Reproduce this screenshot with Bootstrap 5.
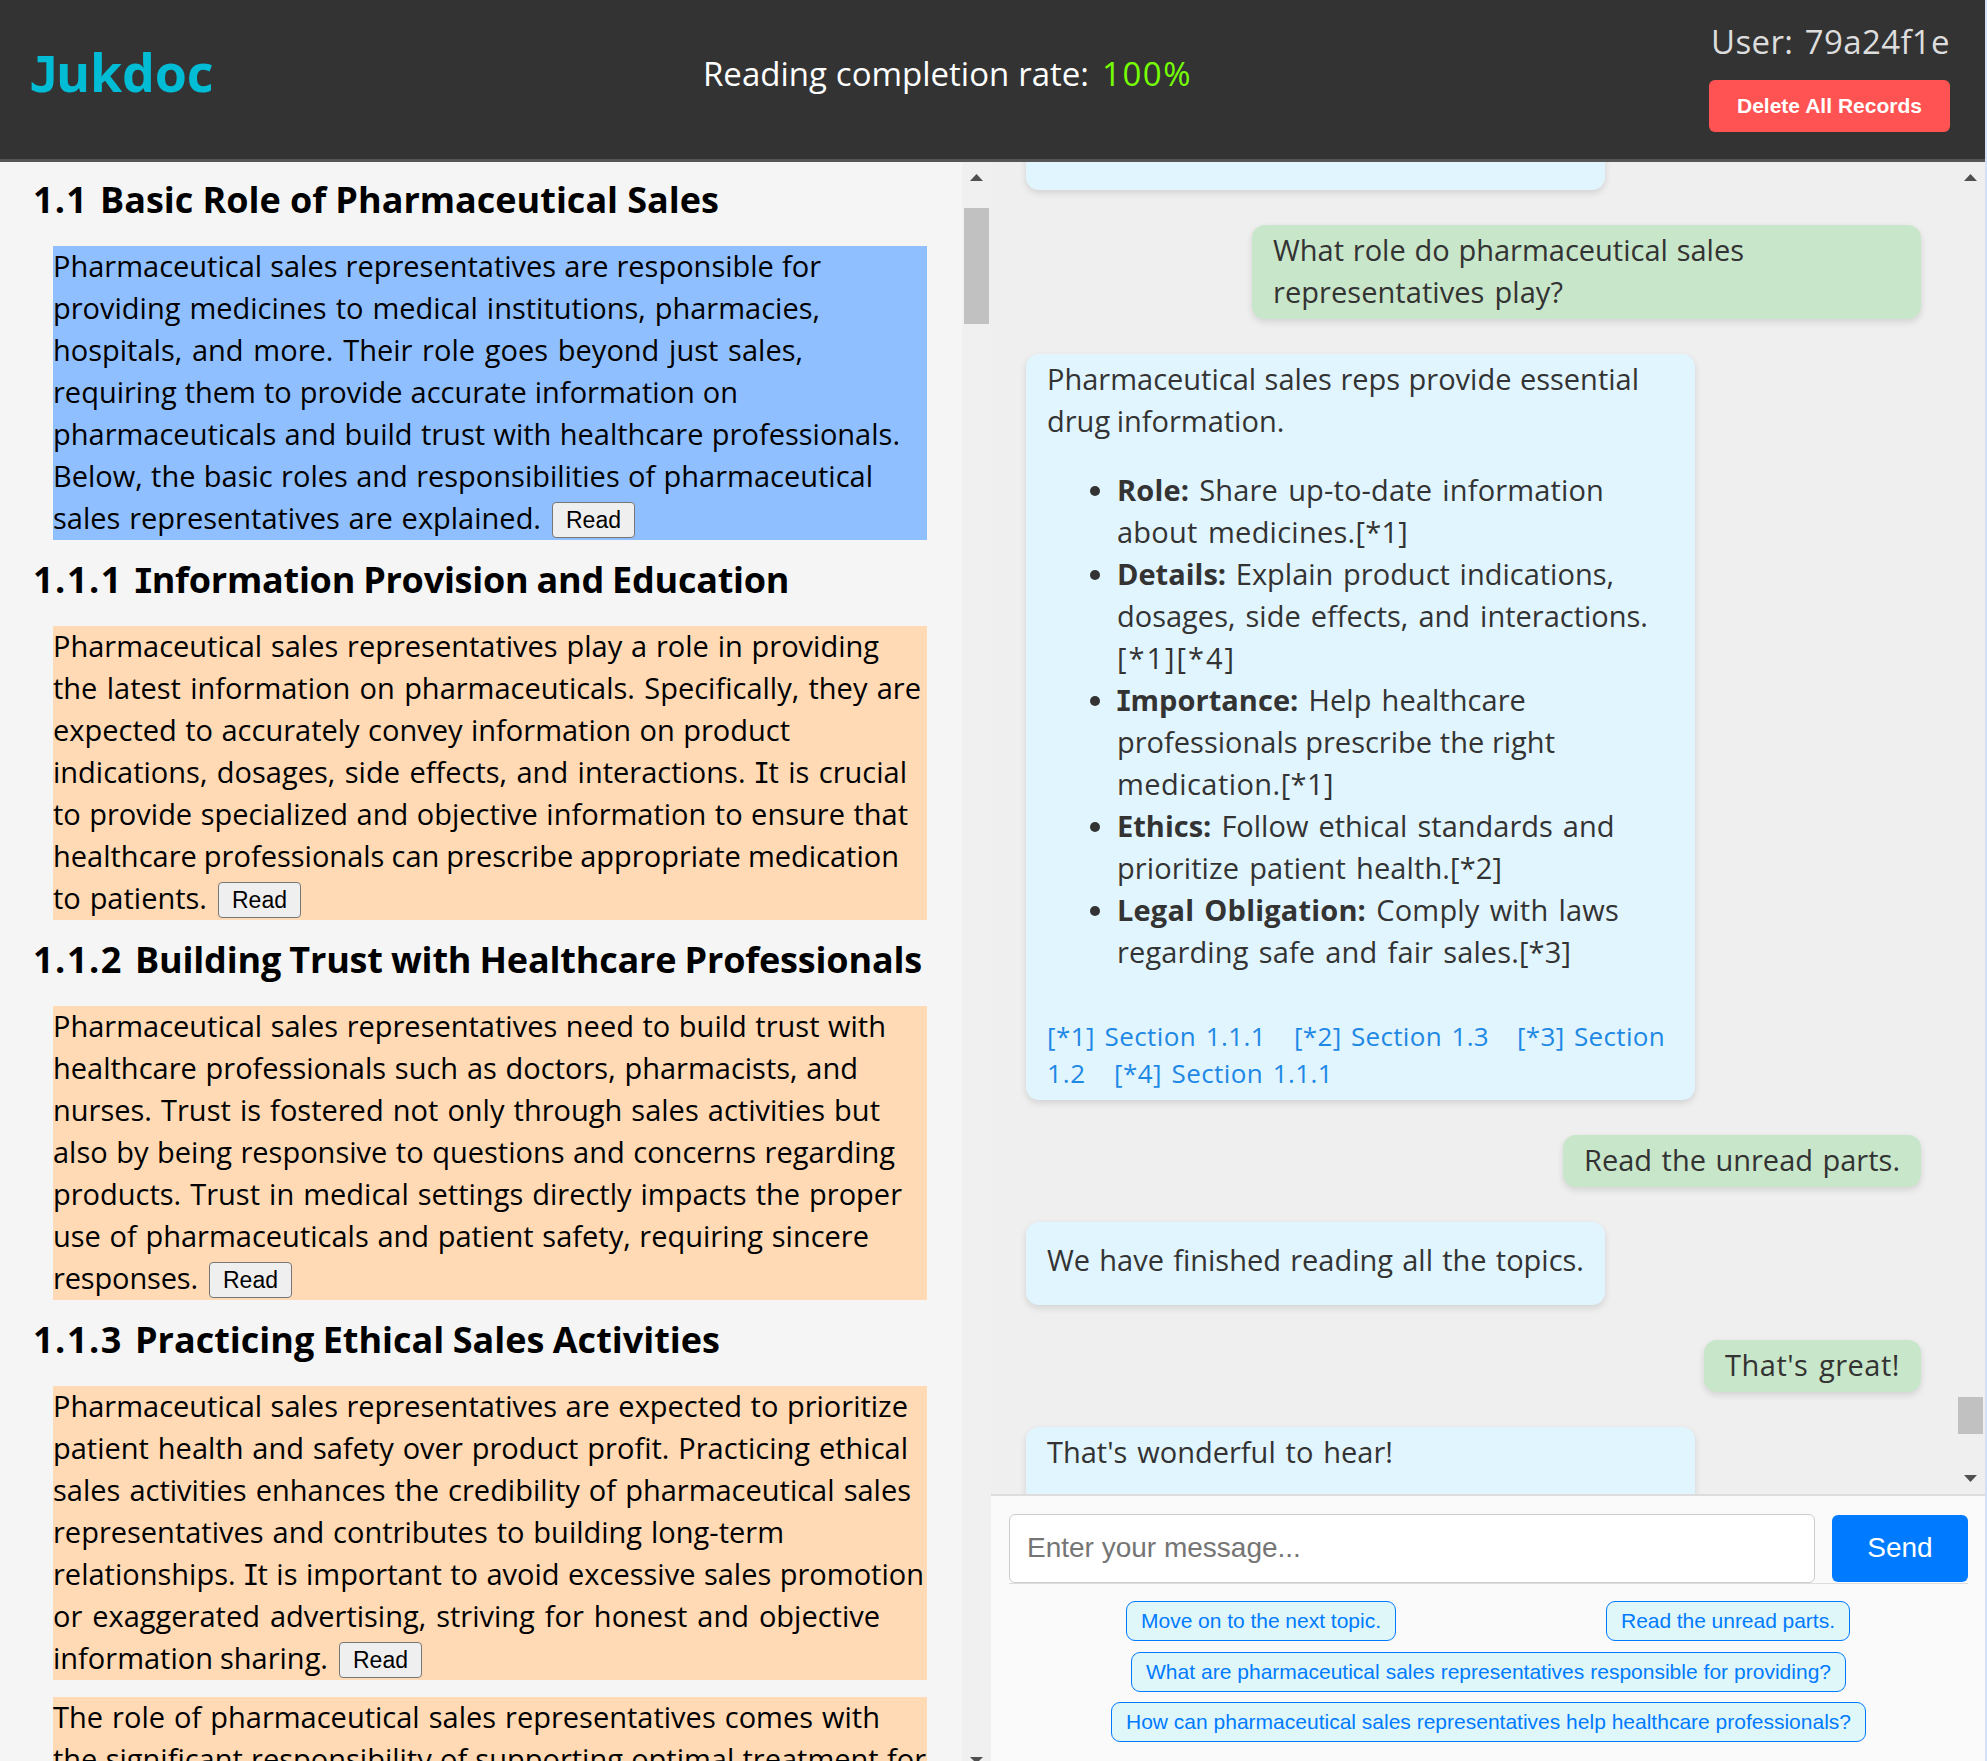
<!DOCTYPE html>
<html lang="en"><head><meta charset="utf-8"><title>Jukdoc</title>
<link href="https://cdn.jsdelivr.net/npm/bootstrap@5.3.0/dist/css/bootstrap.min.css" rel="stylesheet">
<style>
html,body{height:100%;overflow:hidden}
body{font-family:"Open Sans","Noto Sans",sans-serif;font-size:29px;line-height:42px;color:#000;background:#d3e0fa}
.page{width:1985px;height:1761px;background:#f5f5f5}
.topbar{height:162px;background:#333;border-bottom:3px solid #555;color:#fff;padding:0 35px 0 32px}
.brand{font-size:52px;font-weight:700;color:#00bcd4;line-height:60px;width:671px;padding-bottom:15px}
.rate{font-size:33px;padding-bottom:11px}
.rate .pct{color:#76ff03;margin-left:13px}
.user{font-size:33px;color:#ddd;line-height:42px;padding-top:21px}
.del{width:241px;height:52px;background:#ff5252;color:#fff;border-radius:6px;font:700 21px "Liberation Sans",sans-serif;border:0;padding:0;margin-top:17px}
.ln{display:block;white-space:nowrap}
[data-w]{white-space:nowrap;display:inline-block}
.ln>[data-w]{vertical-align:top}
.serif-i{font-family:"DejaVu Sans Mono",monospace;line-height:1;font-size:.96em;letter-spacing:0;margin:0 -.06em}
.doc{width:962px;padding:0 35px 0 33px;overflow:hidden}
.doc h2{font-size:36px;font-weight:700;line-height:50px;margin:0;height:86px;padding-top:15px}
.doc h2.first{height:84px;padding-top:13px}
.num{margin-right:12px}
.para{margin:0 0 0 20px;background:#ffdab5;height:294px;display:flow-root}
.para .ln:first-child{margin-top:-1px}
.para.now{background:#90bfff}
.rd{width:83px;height:36px;border:1px solid #767676;border-radius:4px;background:#efefef;color:#000;font:23px/32px "Liberation Sans",sans-serif;padding:0;margin:5px 0 0 11px;vertical-align:top}
.sbar{width:29px;background:#f0f0f0;padding:12px 0 0 2px;flex:none}
.sbar .thumb{width:25px;background:#c1c1c1}
.sbar svg{display:block;margin-left:6px}
.talk{height:1332px;background:#efefef;overflow:hidden}
.msgs{width:965px;padding:0 35px;gap:35px}
.bub{border-radius:13px;padding:4px 21px 6px;color:#333;box-shadow:0 3px 7px rgba(0,0,0,.12);flex:none;font-size:29px}
.bot{background:#e1f5fe;align-self:flex-start}
.me{background:#c8e6c9;align-self:flex-end}
.wide{width:669px}
.bub ul{margin:27px 0 0;padding-left:70px}
.refs{font-size:26px;line-height:37px;color:#1e88e5;margin-top:45px;padding-bottom:2px}
.foot{background:#fafafa;border-top:2px solid #ddd;height:267px;padding:18px 17px 0 18px}
.entry{border-bottom:1px solid #ddd;height:70px}
.msg{width:806px;height:69px;border:1px solid #ccc;border-radius:6px;font:28px "Liberation Sans",sans-serif;padding:0 17px 2px;background:#fff}
.msg::placeholder{color:#757575;opacity:1}
.send{width:136px;height:67px;margin-top:1px;background:#007bff;color:#fff;border:0;border-radius:6px;font:28px "Liberation Sans",sans-serif;padding:0 0 2px}
.sug{height:40px;border:1.5px solid #007bff;border-radius:9px;background:#e0f7fa;color:#007bff;font:21px/36px "Liberation Sans",sans-serif;padding:0}
</style></head><body>
<div class="page d-flex flex-column">
<header class="topbar d-flex align-items-center">
<div class="brand"><span data-w="181"><span class="serif-i">J</span>ukdoc</span></div>
<div class="rate"><span data-w="386">Reading completion rate:</span><span class="pct" data-w="90">100%</span></div>
<div class="ms-auto align-self-start text-end d-flex flex-column align-items-end"><div class="user"><span data-w="239">User: 79a24f1e</span></div><button class="del"><span data-w="185">Delete All Records</span></button></div>
</header>
<div class="d-flex flex-grow-1" style="height:1599px">
<main class="doc">
<h2 class="first"><span class="num" data-w="55">1.1</span><span data-w="619">Basic Role of Pharmaceutical Sales</span></h2>
<div class="para now"><div class="ln"><span data-w="768">Pharmaceutical sales representatives are responsible for</span></div><div class="ln"><span data-w="767">providing medicines to medical institutions, pharmacies,</span></div><div class="ln"><span data-w="750">hospitals, and more. Their role goes beyond just sales,</span></div><div class="ln"><span data-w="685">requiring them to provide accurate information on</span></div><div class="ln"><span data-w="847">pharmaceuticals and build trust with healthcare professionals.</span></div><div class="ln"><span data-w="820">Below, the basic roles and responsibilities of pharmaceutical</span></div><div class="ln"><span data-w="488">sales representatives are explained.</span><button class="rd">Read</button></div></div>
<h2><span class="num" data-w="90">1.1.1</span><span data-w="654"><span class="serif-i">I</span>nformation Provision and Education</span></h2>
<div class="para"><div class="ln"><span data-w="826">Pharmaceutical sales representatives play a role in providing</span></div><div class="ln"><span data-w="868">the latest information on pharmaceuticals. Specifically, they are</span></div><div class="ln"><span data-w="737">expected to accurately convey information on product</span></div><div class="ln"><span data-w="854">indications, dosages, side effects, and interactions. <span class="serif-i">I</span>t is crucial</span></div><div class="ln"><span data-w="855">to provide specialized and objective information to ensure that</span></div><div class="ln"><span data-w="846">healthcare professionals can prescribe appropriate medication</span></div><div class="ln"><span data-w="154">to patients.</span><button class="rd">Read</button></div></div>
<h2><span class="num" data-w="90">1.1.2</span><span data-w="787">Building Trust with Healthcare Professionals</span></h2>
<div class="para"><div class="ln"><span data-w="833">Pharmaceutical sales representatives need to build trust with</span></div><div class="ln"><span data-w="805">healthcare professionals such as doctors, pharmacists, and</span></div><div class="ln"><span data-w="827">nurses. Trust is fostered not only through sales activities but</span></div><div class="ln"><span data-w="842">also by being responsive to questions and concerns regarding</span></div><div class="ln"><span data-w="849">products. Trust in medical settings directly impacts the proper</span></div><div class="ln"><span data-w="816">use of pharmaceuticals and patient safety, requiring sincere</span></div><div class="ln"><span data-w="145">responses.</span><button class="rd">Read</button></div></div>
<h2><span class="num" data-w="90">1.1.3</span><span data-w="585">Practicing Ethical Sales Activities</span></h2>
<div class="para"><div class="ln"><span data-w="855">Pharmaceutical sales representatives are expected to prioritize</span></div><div class="ln"><span data-w="855">patient health and safety over product profit. Practicing ethical</span></div><div class="ln"><span data-w="858">sales activities enhances the credibility of pharmaceutical sales</span></div><div class="ln"><span data-w="731">representatives and contributes to building long-term</span></div><div class="ln"><span data-w="871">relationships. <span class="serif-i">I</span>t is important to avoid excessive sales promotion</span></div><div class="ln"><span data-w="827">or exaggerated advertising, striving for honest and objective</span></div><div class="ln"><span data-w="275">information sharing.</span><button class="rd">Read</button></div></div>
<div class="para" style="margin-top:17px"><div class="ln"><span data-w="827">The role of pharmaceutical sales representatives comes with</span></div><div class="ln"><span data-w="873">the significant responsibility of supporting optimal treatment for</span></div></div>
</main>
<div class="sbar d-flex flex-column justify-content-between"><div><svg width="13" height="7"><path d="M0 7L6.5 0L13 7Z" fill="#505050"/></svg><div class="thumb" style="height:116px;margin-top:27px"></div></div><svg width="13" height="4"><path d="M0 0H13L9 4H4Z" fill="#505050"/></svg></div>
<section class="flex-grow-1 d-flex flex-column">
<div class="talk d-flex">
<div class="msgs d-flex flex-column">
<div class="bub bot" style="width:579px;height:82px;margin-top:-54px"></div>
<div class="bub me wide"><div class="ln"><span data-w="471">What role do pharmaceutical sales</span></div><div class="ln"><span data-w="290">representatives play?</span></div></div>
<div class="bub bot wide"><div class="ln"><span data-w="592">Pharmaceutical sales reps provide essential</span></div><div class="ln"><span data-w="237">drug information.</span></div>
<ul><li><div class="ln"><span data-w="487"><b>Role:</b> Share up-to-date information</span></div><div class="ln"><span data-w="291">about medicines.[*1]</span></div></li>
<li><div class="ln"><span data-w="497"><b>Details:</b> Explain product indications,</span></div><div class="ln"><span data-w="531">dosages, side effects, and interactions.</span></div><div class="ln"><span data-w="119">[*1][*4]</span></div></li>
<li><div class="ln"><span data-w="409"><b><span class="serif-i">I</span>mportance:</b> Help healthcare</span></div><div class="ln"><span data-w="438">professionals prescribe the right</span></div><div class="ln"><span data-w="217">medication.[*1]</span></div></li>
<li><div class="ln"><span data-w="498"><b>Ethics:</b> Follow ethical standards and</span></div><div class="ln"><span data-w="385">prioritize patient health.[*2]</span></div></li>
<li><div class="ln"><span data-w="502"><b>Legal Obligation:</b> Comply with laws</span></div><div class="ln"><span data-w="454">regarding safe and fair sales.[*3]</span></div></li></ul>
<div class="refs"><div class="ln"><span data-w="219">[*1] Section 1.1.1</span><span data-w="195" style="margin-left:28px">[*2] Section 1.3</span><span data-w="148" style="margin-left:28px">[*3] Section</span></div><div class="ln"><span data-w="39">1.2</span><span data-w="219" style="margin-left:28px">[*4] Section 1.1.1</span></div></div></div>
<div class="bub me"><div class="ln"><span data-w="316">Read the unread parts.</span></div></div>
<div class="bub bot" style="padding-top:17px;padding-bottom:24px"><div class="ln"><span data-w="537">We have finished reading all the topics.</span></div></div>
<div class="bub me"><div class="ln"><span data-w="175">That's great!</span></div></div>
<div class="bub bot wide" style="height:200px"><div class="ln"><span data-w="346">That's wonderful to hear!</span></div></div>
</div>
<div class="sbar d-flex flex-column justify-content-between ms-auto" style="padding-bottom:12px;background:#efefef;width:28px;padding-left:1px"><div><svg width="13" height="7"><path d="M0 7L6.5 0L13 7Z" fill="#505050"/></svg><div class="thumb" style="height:37px;margin-top:1216px"></div></div><svg width="13" height="7"><path d="M0 0H13L6.5 7Z" fill="#505050"/></svg></div>
</div>
<div class="foot">
<div class="entry d-flex justify-content-between align-items-start"><input class="msg" placeholder="Enter your message..."><button class="send">Send</button></div>
<div class="d-flex justify-content-between" style="padding:17px 118px 0 117px"><button class="sug" style="width:270px"><span data-w="240">Move on to the next topic.</span></button><button class="sug" style="width:244px"><span data-w="214">Read the unread parts.</span></button></div>
<div class="d-flex flex-column align-items-center" style="gap:10px;margin-top:11px"><button class="sug" style="width:715px"><span data-w="685">What are pharmaceutical sales representatives responsible for providing?</span></button><button class="sug" style="width:755px"><span data-w="725">How can pharmaceutical sales representatives help healthcare professionals?</span></button></div>
</div>
</section>
</div></div>
<script>
// Justify each line to its measure: word gaps first, then tracking
document.querySelectorAll('[data-w]').forEach(s=>{
 const t=s.textContent,n=(t.match(/ /g)||[]).length;
 let d=s.dataset.w-s.getBoundingClientRect().width;
 if(n){const ws=Math.max(-1,Math.min(2.5,d/n));s.style.wordSpacing=ws+'px';d-=ws*n}
 if(Math.abs(d)>1)s.style.letterSpacing=d/t.length+'px';
});
</script>
<script src="https://cdn.jsdelivr.net/npm/bootstrap@5.3.0/dist/js/bootstrap.bundle.min.js"></script>
</body></html>
